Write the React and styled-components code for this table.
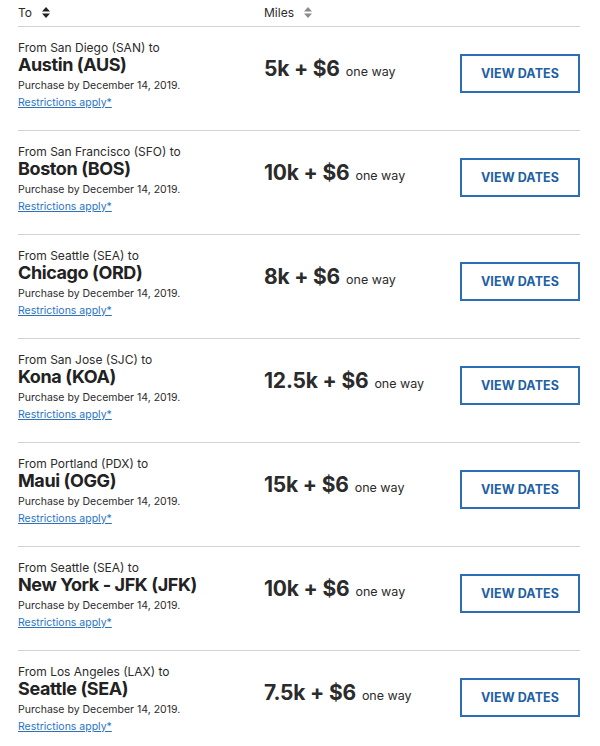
import React from 'react';
import styled, { createGlobalStyle } from 'styled-components';

const GlobalStyle = createGlobalStyle`
    body {
        margin: 0;
        background: #fff;
        font-family: 'Inter', 'Liberation Sans', sans-serif;
        color: #2b2b2b;
    }
`;

const Table = styled.div`
    width: 600px;
    padding: 0 20px 0 18px;
    box-sizing: border-box;
`;

const Columns = styled.div`
    display: grid;
    grid-template-columns: 246px 196px 120px;
    border-bottom: 1px solid #d3d3d3;
`;

const HeaderRow = styled(Columns)`
    height: 26px;
    align-items: center;
    font-size: 12px;
    color: #2b2b2b;
`;

const HeaderCell = styled.div`
    display: flex;
    align-items: center;
    gap: 10px;
    padding-bottom: 1px;
`;

const SortIcon = ({ color }) => (
    <svg width="8" height="11" viewBox="0 0 8 11">
        <path d="M4 0 L8 4.5 L0 4.5 Z M4 11 L8 6.5 L0 6.5 Z" fill={color} />
    </svg>
);

const Row = styled(Columns)`
    height: 104px;
    box-sizing: border-box;
    align-items: start;
    padding-top: 14px;
`;

const RouteCell = styled.div`
    display: flex;
    flex-direction: column;
`;

const FromLine = styled.div`
    font-size: 12px;
    line-height: 14px;
    color: #2b2b2b;
`;

const City = styled.div`
    font-size: 18px;
    font-weight: 700;
    line-height: 20px;
    letter-spacing: -0.4px;
    color: #222;
`;

const Purchase = styled.div`
    font-size: 10.5px;
    line-height: 13px;
    margin-top: 4px;
    color: #2b2b2b;
`;

const Restrict = styled.a`
    font-size: 10.5px;
    line-height: 13px;
    margin-top: 4px;
    color: #2a74bf;
    text-decoration: underline;
    cursor: pointer;
`;

const Price = styled.div`
    margin-top: 15px;
    display: flex;
    align-items: baseline;
    gap: 6px;
`;

const Amount = styled.span`
    font-size: 21px;
    font-weight: 700;
    color: #2b2b2b;
    letter-spacing: -0.2px;
`;

const Way = styled.span`
    font-size: 12.5px;
    color: #2b2b2b;
`;

const ViewButton = styled.button`
    margin-top: 13px;
    width: 120px;
    height: 39px;
    border: 2px solid #2c6db4;
    background: #fff;
    color: #225fa3;
    font-family: inherit;
    font-size: 12.5px;
    font-weight: 700;
    letter-spacing: 0.1px;
    cursor: pointer;
`;

const deals = [
    { from: 'San Diego (SAN)', to: 'Austin (AUS)', miles: '5k' },
    { from: 'San Francisco (SFO)', to: 'Boston (BOS)', miles: '10k' },
    { from: 'Seattle (SEA)', to: 'Chicago (ORD)', miles: '8k' },
    { from: 'San Jose (SJC)', to: 'Kona (KOA)', miles: '12.5k' },
    { from: 'Portland (PDX)', to: 'Maui (OGG)', miles: '15k' },
    { from: 'Seattle (SEA)', to: 'New York - JFK (JFK)', miles: '10k' },
    { from: 'Los Angeles (LAX)', to: 'Seattle (SEA)', miles: '7.5k' },
];

export default function App() {
    return (
        <Table>
            <GlobalStyle />
            <HeaderRow>
                <HeaderCell>To <SortIcon color="#222" /></HeaderCell>
                <HeaderCell>Miles <SortIcon color="#8a8a8a" /></HeaderCell>
                <div />
            </HeaderRow>
            {deals.map((d) => (
                <Row key={d.to}>
                    <RouteCell>
                        <FromLine>From {d.from} to</FromLine>
                        <City>{d.to}</City>
                        <Purchase>Purchase by December 14, 2019.</Purchase>
                        <Restrict>Restrictions apply*</Restrict>
                    </RouteCell>
                    <Price>
                        <Amount>{d.miles} + $6</Amount>
                        <Way>one way</Way>
                    </Price>
                    <ViewButton>VIEW DATES</ViewButton>
                </Row>
            ))}
        </Table>
    );
}
